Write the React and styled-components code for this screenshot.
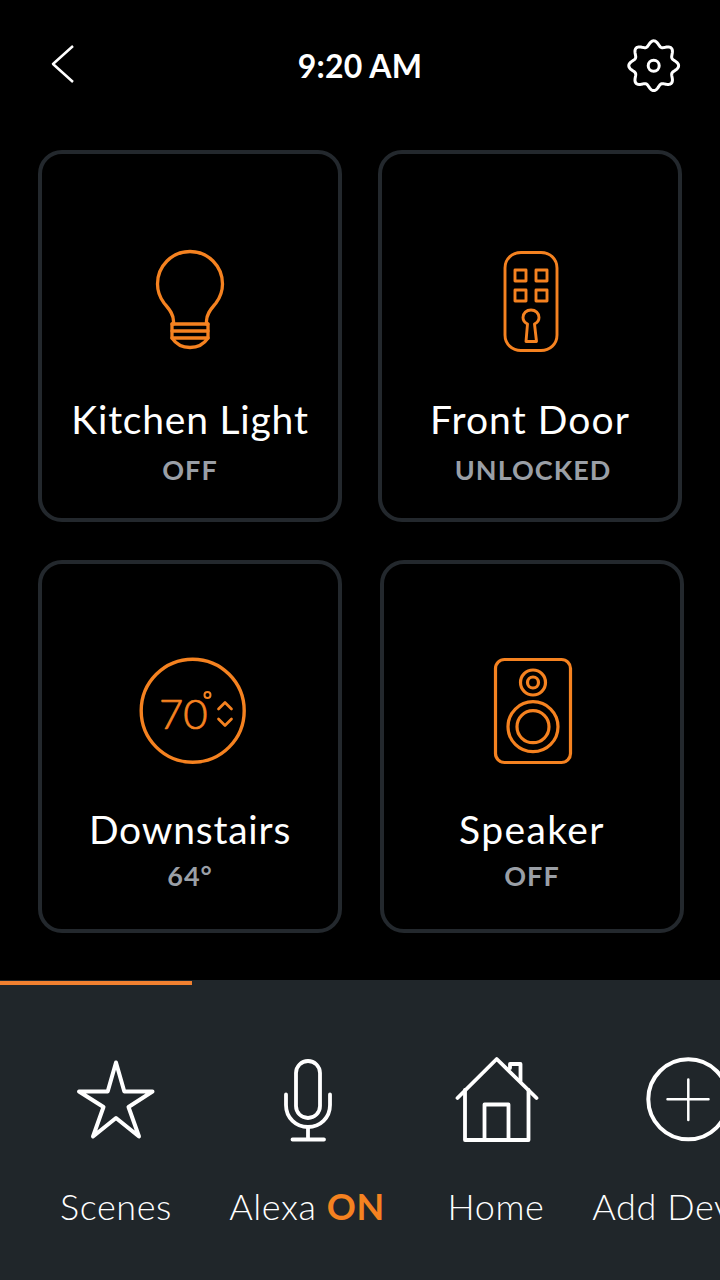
import React from "react";
import styled, { createGlobalStyle } from "styled-components";

const ORANGE = "#f58220";

const Global = createGlobalStyle`
  html, body { margin: 0; padding: 0; background: #000; }
  body { font-family: Lato, "Open Sans", sans-serif; overflow: hidden; }
`;

const Screen = styled.div`
  width: 720px;
  height: 1280px;
  background: #000;
  color: #fff;
  display: flex;
  flex-direction: column;
  overflow: hidden;
`;

const Header = styled.header`
  height: 150px;
  flex: none;
  padding: 36px 36px 0;
  box-sizing: border-box;
  display: grid;
  grid-template-columns: 1fr auto 1fr;
  align-items: start;
`;

const BackSlot = styled.div`
  padding: 4px 0 0 6px;
`;

const GearSlot = styled.div`
  justify-self: end;
`;

const Time = styled.div`
  font-size: 32px;
  font-weight: 700;
  line-height: 60px;
  letter-spacing: 0.2px;
`;

const Cards = styled.main`
  display: flex;
  flex-direction: column;
  gap: 38px;
  padding-left: 38px;
`;

const Row = styled.div`
  display: flex;
  gap: ${(p) => p.$gap}px;
`;

const Card = styled.section`
  width: 304px;
  height: ${(p) => p.$height}px;
  box-sizing: border-box;
  border: 4px solid #23282d;
  border-radius: 24px;
  padding-top: ${(p) => p.$top}px;
  display: flex;
  flex-direction: column;
  align-items: center;
`;

const Label = styled.div`
  font-size: 39px;
  font-weight: 400;
  line-height: 46px;
  letter-spacing: ${(p) => p.$spacing ?? 0.8}px;
  margin-top: ${(p) => p.$top}px;
  white-space: nowrap;
`;

const Status = styled.div`
  font-size: 27px;
  font-weight: 700;
  line-height: 34px;
  letter-spacing: 1px;
  color: #9a9fa6;
  margin-top: ${(p) => p.$top}px;
  margin-left: ${(p) => p.$shift || 0}px;
`;

const Glyph = styled.svg`
  display: block;
  flex: none;
  fill: none;
  stroke: ${(p) => p.$color || "#fff"};
  stroke-width: ${(p) => p.$stroke || 3}px;
  stroke-linecap: round;
  stroke-linejoin: round;
`;

const Degrees = styled.text`
  font-family: Lato, sans-serif;
  font-weight: 300;
  font-size: 42px;
  fill: ${ORANGE};
  stroke: ${ORANGE};
  stroke-width: 0.7px;
`;

const Nav = styled.nav`
  margin-top: auto;
  height: 300px;
  flex: none;
  background: #20262a;
  overflow: hidden;
`;

const Indicator = styled.div`
  width: 192px;
  height: 4px;
  margin-top: 1px;
  background: #f08030;
`;

const NavRow = styled.div`
  display: flex;
  padding: 65px 0 0 20px;
`;

const NavItem = styled.div`
  flex: none;
  width: ${(p) => p.$width}px;
  display: flex;
  flex-direction: column;
  align-items: center;
`;

const NavLabel = styled.div`
  font-size: 36px;
  font-weight: 300;
  line-height: 44px;
  letter-spacing: 0.6px;
  margin-top: 34px;
  white-space: nowrap;
`;

const On = styled.span`
  font-weight: 700;
  color: ${ORANGE};
`;

const gearPath = (() => {
  const cx = 653.7, cy = 65.7, pts = [];
  for (let i = 0; i < 240; i++) {
    const t = (i / 240) * Math.PI * 2;
    const r = 22.3 + 2.6 * Math.cos(8 * t);
    pts.push(`${(cx + r * Math.sin(t)).toFixed(2)} ${(cy - r * Math.cos(t)).toFixed(2)}`);
  }
  return "M" + pts.join("L") + "Z";
})();

const Bulb = () => (
  <Glyph $color={ORANGE} $stroke={3.3} width="120" height="125" viewBox="130 235 120 125">
    <path d="M173.5 324V321C173.5 313 168 308 164 303C159.5 297 157.5 291 157.5 284C157.5 266 172 251.5 190 251.5C208 251.5 222.5 266 222.5 284C222.5 291 220.5 297 216 303C212 308 206.5 313 206.5 321V324" />
    <path d="M172 324H208M172 331H208M172 338H208" />
    <path d="M172 324V338C176 344 182 347.5 190 347.5C198 347.5 204 344 208 338V324" />
  </Glyph>
);

const Door = () => (
  <Glyph $color={ORANGE} $stroke={2.9} width="120" height="125" viewBox="470 235 120 125">
    <path d="M521 252.5H541C550 252.500 557 259 557 268V335C557 344 550 350.500 541 350.500H521C512 350.500 505 344 505 335V268C505 259 512 252.500 521 252.500Z" />
    <rect x="515" y="270" width="11" height="11" />
    <rect x="536" y="270" width="11" height="11" />
    <rect x="515" y="290" width="11" height="11" />
    <rect x="536" y="290" width="11" height="11" />
    <path d="M527.5 324C524.5 322.5 523 320.5 523 317.5C523 313 526.5 310 531 310C535.5 310 539 313 539 317.5C539 320.5 537.5 322.5 534.5 324L536.5 341.5H526Z" />
  </Glyph>
);

const Thermostat = () => (
  <Glyph $color={ORANGE} $stroke={3.4} width="122" height="125" viewBox="129 650 122 125">
    <circle cx="192.7" cy="710.7" r="51.5" />
    <Degrees x="159" y="729">70</Degrees>
    <circle cx="207.5" cy="695" r="3" strokeWidth="2" />
    <path d="M218.5 709L225 702.5L231.5 709M218.5 719L225 725.500L231.5 719" strokeWidth="2.7" />
  </Glyph>
);

const Speaker = () => (
  <Glyph $color={ORANGE} $stroke={3.2} width="114" height="125" viewBox="475 650 114 125">
    <rect x="495.5" y="659.5" width="75" height="103" rx="9" />
    <circle cx="533" cy="682.5" r="12.5" />
    <circle cx="533" cy="682.5" r="5.5" />
    <circle cx="533" cy="726.7" r="25" />
    <circle cx="533" cy="726.7" r="16" />
  </Glyph>
);

export default function App() {
  return (
    <>
      <Global />
      <Screen>
        <Header>
          <BackSlot>
            <Glyph $stroke={2.5} width="40" height="50" viewBox="42 40 40 50">
              <path d="M73 46L53 64L73 82" strokeLinecap="butt" />
            </Glyph>
          </BackSlot>
          <Time>9:20 AM</Time>
          <GearSlot>
            <Glyph width="60" height="60" viewBox="624 36 60 60">
              <path d={gearPath} />
              <circle cx="653.7" cy="65.7" r="5.5" />
            </Glyph>
          </GearSlot>
        </Header>
        <Cards>
          <Row $gap={36}>
            <Card $height={372} $top={81}>
              <Bulb />
              <Label $top={36}>Kitchen Light</Label>
              <Status $top={11}>OFF</Status>
            </Card>
            <Card $height={372} $top={81}>
              <Door />
              <Label $top={36} $spacing={1.1}>Front Door</Label>
              <Status $top={11} $shift={6}>UNLOCKED</Status>
            </Card>
          </Row>
          <Row $gap={38}>
            <Card $height={373} $top={86}>
              <Thermostat />
              <Label $top={31}>Downstairs</Label>
              <Status $top={7}>64°</Status>
            </Card>
            <Card $height={373} $top={86}>
              <Speaker />
              <Label $top={31} $spacing={1.4}>Speaker</Label>
              <Status $top={7}>OFF</Status>
            </Card>
          </Row>
        </Cards>
        <Nav>
          <Indicator />
          <NavRow>
            <NavItem $width={192}>
              <Glyph $stroke={4} width="192" height="100" viewBox="20 1050 192 100">
                <path d="M116 1062.500L124.3 1091.500H152.500L128.5 1107L139 1136.500L116 1118L93 1136.500L103.5 1107L79 1091.5H107.7Z" />
              </Glyph>
              <NavLabel>Scenes</NavLabel>
            </NavItem>
            <NavItem $width={190}>
              <Glyph $stroke={3.8} width="190" height="100" viewBox="212 1050 190 100">
                <rect x="296" y="1061" width="24" height="57" rx="12" />
                <path d="M286 1094.5V1105C286 1118 296 1127 308 1127C320 1127 330 1118 330 1105V1094.5" />
                <path d="M308 1127V1139M292.5 1139.5H324" />
              </Glyph>
              <NavLabel>
                Alexa <On>ON</On>
              </NavLabel>
            </NavItem>
            <NavItem $width={188}>
              <Glyph $stroke={3.8} width="188" height="100" viewBox="402 1050 188 100">
                <path d="M457.5 1098L496.7 1059L536.5 1098" />
                <path d="M465 1090V1140H528.5V1090" />
                <path d="M484.5 1140V1104.5H508.5V1140" />
                <path d="M510 1068V1064H520.5V1081" />
              </Glyph>
              <NavLabel>Home</NavLabel>
            </NavItem>
            <NavItem $width={190}>
              <Glyph $stroke={4} width="190" height="100" viewBox="590 1050 190 100">
                <circle cx="688.3" cy="1099.3" r="40" />
                <path d="M667.5 1099.3H708.5M688.3 1079.5V1120" strokeWidth="2.5" />
              </Glyph>
              <NavLabel>Add Device</NavLabel>
            </NavItem>
          </NavRow>
        </Nav>
      </Screen>
    </>
  );
}
